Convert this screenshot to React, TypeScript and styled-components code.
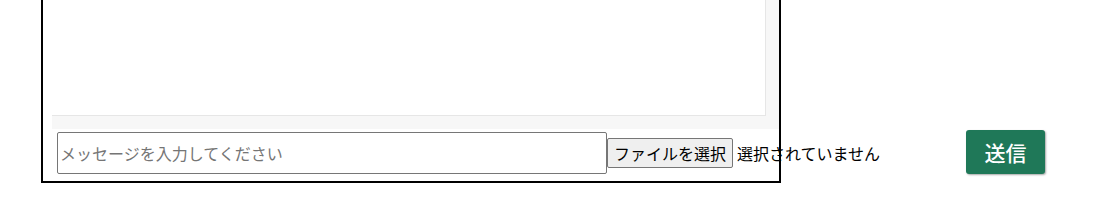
import React from "react";
import styled, { createGlobalStyle } from "styled-components";

const GlobalStyle = createGlobalStyle`
  html, body {
    margin: 0;
    padding: 0;
    background: #fff;
    font-family: "Noto Sans CJK JP", "Noto Sans", sans-serif;
  }
`;

const Page = styled.div`
  padding-left: 41px;
  width: 1102px;
  height: 202px;
  box-sizing: border-box;
  overflow: hidden;
`;

// the frame is painted as an overlay so overflowing text sits under it
const ChatBox = styled.div`
  position: relative;
  width: 740px;
  height: 183px;
  box-sizing: border-box;
  padding: 0 2px 2px 11px;
  display: flex;
  flex-direction: column;

  &::after {
    content: "";
    position: absolute;
    inset: 0;
    border: 2px solid #000;
    border-top: none;
    pointer-events: none;
  }
`;

// message list with its (empty) scrollbar tracks on the right and bottom
const MessageArea = styled.div`
  height: 129px;
  flex-shrink: 0;
  box-sizing: border-box;
  background: #f7f7f7;
  padding: 0 13px 13px 0;
  display: flex;
`;

const MessageList = styled.div`
  flex: 1;
  background: #fff;
  border-right: 1px solid #e6e6e6;
  border-bottom: 1px solid #e6e6e6;
`;

const FormRow = styled.form`
  display: flex;
  align-items: center;
  height: 44px;
  margin-top: 2px;
  padding-left: 5px;
`;

const MessageInput = styled.input`
  flex: 0 0 550px;
  height: 42px;
  box-sizing: border-box;
  border: 1px solid #767676;
  border-radius: 2px;
  padding: 0 2px;
  font-family: inherit;
  font-size: 16px;
  color: #000;
  &::placeholder {
    color: #757575;
  }
`;

const FileField = styled.label`
  flex: 0 0 359px;
  display: flex;
  align-items: center;
  gap: 4px;
  font-size: 16px;
  color: #000;
  white-space: nowrap;
`;

const FileButton = styled.span`
  height: 30px;
  box-sizing: border-box;
  display: inline-flex;
  align-items: center;
  padding: 0 6px;
  background: #efefef;
  border: 1px solid #767676;
  border-radius: 2px;
  font-size: 16px;
`;

const SendButton = styled.button<{ $bg?: string }>`
  flex: 0 0 79px;
  height: 44px;
  margin-top: -2px;
  border: none;
  border-radius: 3px;
  background: ${(p) => p.$bg ?? "#1f7858"};
  color: #fff;
  font-family: inherit;
  font-size: 21px;
  font-weight: 500;
  box-shadow: 1px 1px 2px rgba(0, 0, 0, 0.35);
  cursor: pointer;
`;

export default function App() {
  return (
    <>
      <GlobalStyle />
      <Page>
        <ChatBox>
          <MessageArea>
            <MessageList />
          </MessageArea>
          <FormRow onSubmit={(e) => e.preventDefault()}>
            <MessageInput type="text" placeholder="メッセージを入力してください" />
            <FileField>
              <FileButton>ファイルを選択</FileButton>
              <span>選択されていません</span>
            </FileField>
            <SendButton type="submit">送信</SendButton>
          </FormRow>
        </ChatBox>
      </Page>
    </>
  );
}
